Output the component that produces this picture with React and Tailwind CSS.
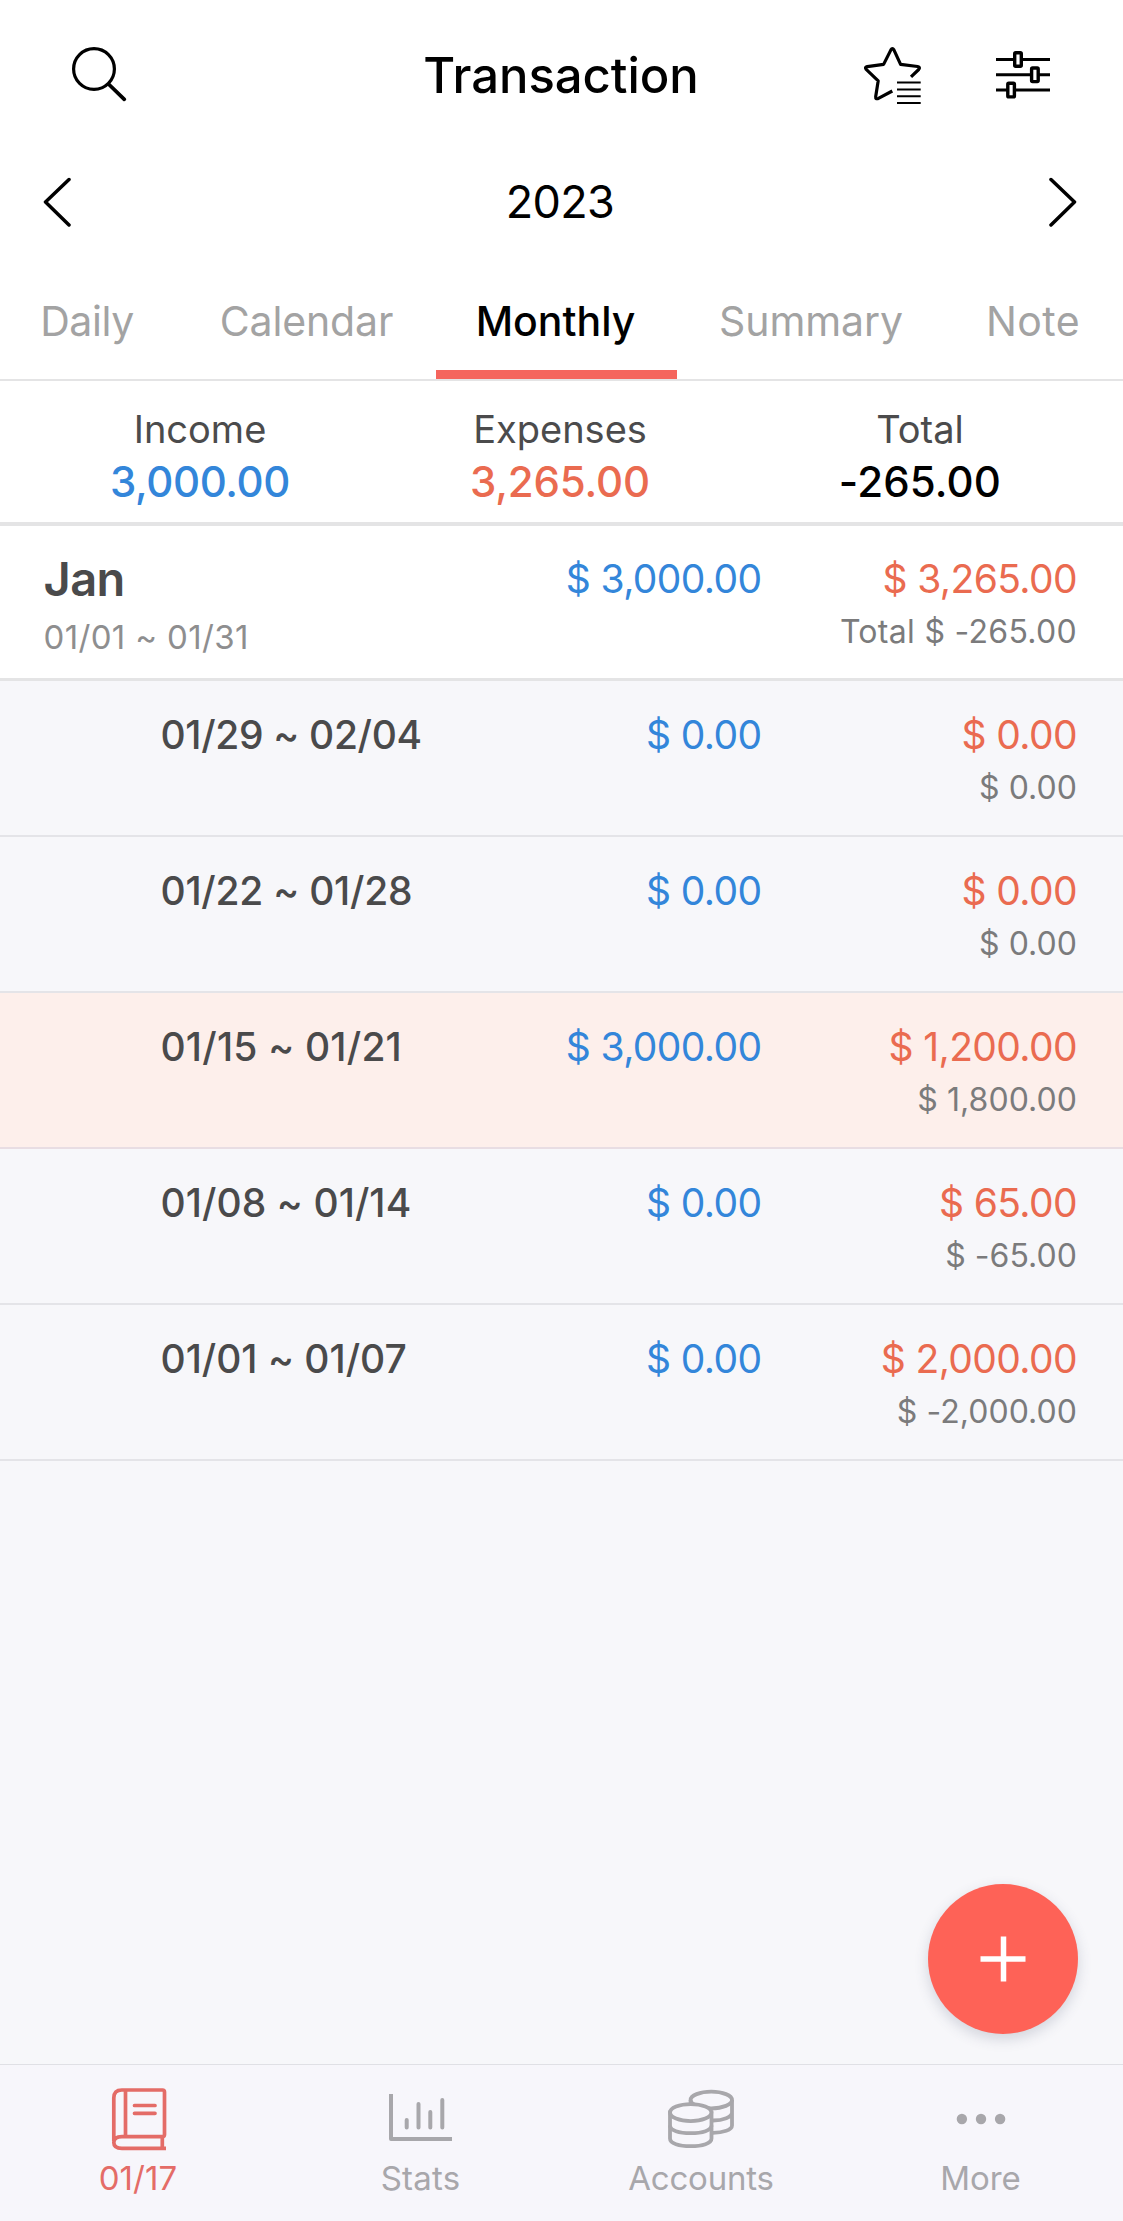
import React from "react";

const tabs = [
  { label: "Daily", cell: "w-[177px] pr-[3px]", text: "tracking-[-0.4px]" },
  { label: "Calendar", cell: "w-[259px]", text: "tracking-[-0.15px]" },
  { label: "Monthly", cell: "w-[241px]", text: "", active: true },
  { label: "Summary", cell: "w-[269px] pr-px", text: "tracking-[-0.08px]" },
  { label: "Note", cell: "w-[175px] pr-px", text: "tracking-[0.4px]" },
];

const totals = [
  { label: "Income", value: "3,000.00", color: "text-[#3386da]", text: "tracking-[-0.4px]" },
  { label: "Expenses", value: "3,265.00", color: "text-[#ea6b50]", text: "tracking-[-0.16px]" },
  { label: "Total", value: "-265.00", color: "text-black", text: "tracking-[0.15px]" },
];

const weeks = [
  { range: "01/29 ~ 02/04", text: "tracking-[-0.33px]", income: "$ 0.00", expense: "$ 0.00", net: "$ 0.00" },
  { range: "01/22 ~ 01/28", text: "tracking-[-0.25px]", income: "$ 0.00", expense: "$ 0.00", net: "$ 0.00" },
  { range: "01/15 ~ 01/21", text: "tracking-[0.2px]", income: "$ 3,000.00", expense: "$ 1,200.00", net: "$ 1,800.00", current: true },
  { range: "01/08 ~ 01/14", text: "tracking-[0.07px]", income: "$ 0.00", expense: "$ 65.00", net: "$ -65.00" },
  { range: "01/01 ~ 01/07", text: "tracking-[-0.02px]", income: "$ 0.00", expense: "$ 2,000.00", net: "$ -2,000.00" },
];

function SearchIcon() {
  return (
    <svg width="60" height="60" viewBox="70 46 60 60" fill="none" stroke="black">
      <circle cx="94" cy="70" r="20.4" strokeWidth="3.2" />
      <path d="M109 85.5 124.3 100.3" strokeWidth="3.8" strokeLinecap="round" />
    </svg>
  );
}

function StarListIcon() {
  return (
    <svg width="60" height="60" viewBox="863 46 60 60" fill="none" stroke="black">
      <path
        d="M892.3 92 878.4 99.4Q875.4 100.6 875.7 97.6L878.2 81.8 866.2 70.4Q864.4 68.2 867.2 67.6L883.6 65.4 890.9 50.9Q892.4 48.2 893.9 50.9L900.6 65.4 917.6 67.5Q920.6 68.2 918.7 70.5L911 77.8"
        strokeWidth="3.2"
        strokeLinejoin="round"
      />
      <path d="M897 83.5h23.7M897 90.4h23.7M897 97.2h23.7M897 104h23.7" strokeWidth="2" />
    </svg>
  );
}

function SlidersIcon() {
  return (
    <svg width="56" height="52" viewBox="995 49 56 52" fill="none" stroke="black" strokeWidth="3">
      <path d="M996 59.4h54M996 74.7h54M996 90h54" />
      <g fill="white" strokeWidth="3.4">
        <rect x="1014.7" y="52.7" width="6.6" height="13.6" rx="1" />
        <rect x="1031.6" y="68" width="6.6" height="13.6" rx="1" />
        <rect x="1007.8" y="83.3" width="6.6" height="13.6" rx="1" />
      </g>
    </svg>
  );
}

function Chevron({ flip }) {
  return (
    <svg
      width="28"
      height="50"
      viewBox="43 176.5 28 50"
      fill="none"
      stroke="black"
      strokeWidth="3.5"
      strokeLinecap="round"
      strokeLinejoin="round"
      className={flip ? "-scale-x-100" : ""}
    >
      <path d="M69 179 45.5 201.5 69 224.5" />
    </svg>
  );
}

function BookIcon() {
  return (
    <svg width="58" height="66" viewBox="110 2086 58 66" fill="none" stroke="currentColor" strokeWidth="3.7">
      <path d="M113.8 2141V2098q0-8 8-8H162.5q2 0 2 2V2134.5q0 2.2-2.2 2.2H122q-8.2 0-8.2 5.8t8.2 5.8H166" />
      <path d="M125.5 2090V2136.7M162.3 2136.7V2148.3" />
      <path d="M134.5 2105.5H155M134.5 2113.3H155" strokeLinecap="round" />
    </svg>
  );
}

function StatsIcon() {
  return (
    <svg width="64" height="66" viewBox="389 2086 64 66" fill="none" stroke="currentColor" strokeWidth="4">
      <path d="M391 2094V2139H452" strokeLinejoin="round" />
      <path d="M406.7 2120V2127.5M418.5 2104V2127.5M430.3 2112V2127.5M442.3 2100V2127.5" strokeLinecap="round" />
    </svg>
  );
}

function CoinsIcon() {
  return (
    <svg width="68" height="66" viewBox="667 2086 68 66" fill="none" stroke="currentColor" strokeWidth="3.8">
      <ellipse cx="711.3" cy="2100" rx="20.7" ry="8.3" />
      <path d="M690.6 2100V2105M732 2100V2125.5C732 2130 723 2132.8 713 2132.8M732 2112.5C732 2117 723 2120.5 713 2120.5" />
      <path d="M670 2112.5V2138.5C670 2143.5 679 2146.2 690.7 2146.2S711.5 2143.5 711.5 2138.5V2112.5Z" className="fill-[#f7f6fb]" />
      <ellipse cx="690.7" cy="2112.6" rx="20.7" ry="8.5" className="fill-[#f7f6fb]" />
      <path d="M670 2125.5C670 2130.5 679 2133.2 690.7 2133.2S711.5 2130.5 711.5 2125.5" />
    </svg>
  );
}

function DotsIcon() {
  return (
    <svg width="54" height="66" viewBox="954 2086 54 66" fill="currentColor">
      <circle cx="961.9" cy="2119" r="5.2" />
      <circle cx="981" cy="2119" r="5.2" />
      <circle cx="1000.1" cy="2119" r="5.2" />
    </svg>
  );
}

const nav = [
  { label: "01/17", Icon: BookIcon, color: "text-[#e46c67]", text: "pr-[2px] tracking-[0.1px]", cell: "w-[278px]" },
  { label: "Stats", Icon: StatsIcon, color: "text-[#a8a7ab]", text: "tracking-[0.2px]", cell: "w-[285px]" },
  { label: "Accounts", Icon: CoinsIcon, color: "text-[#a8a7ab]", text: "tracking-[-0.2px]", cell: "w-[276px]" },
  { label: "More", Icon: DotsIcon, color: "text-[#a8a7ab]", text: "tracking-[-0.1px]", cell: "w-[283px]" },
];

function Amounts({ income, expense, net, netText }) {
  return (
    <>
      <div className="w-[301px] text-right text-[39px] leading-[52px] tracking-[-0.6px] text-[#3386da]">{income}</div>
      <div className="flex w-[315.5px] flex-col text-right">
        <span className="text-[39px] leading-[52px] tracking-[-0.6px] text-[#ea6b50]">{expense}</span>
        <span className={`text-[32px] leading-[53px] text-[#7b7b7c] ${netText}`}>{net}</span>
      </div>
    </>
  );
}

export default function App() {
  return (
    <div className="relative flex h-[2221px] w-[1123px] flex-col overflow-hidden whitespace-nowrap bg-[#f7f7fa] font-['Inter',sans-serif]">
      <div className="bg-white">
        <header className="grid h-[150px] grid-cols-[350px_422px_351px] items-center">
          <div className="pl-[70px]">
            <SearchIcon />
          </div>
          <h1 className="pt-[2px] text-center text-[49px] leading-[60px] font-medium tracking-[-0.04px] text-black">
            Transaction
          </h1>
          <div className="flex items-center gap-[72px] pl-[91px]">
            <StarListIcon />
            <SlidersIcon />
          </div>
        </header>

        <div className="flex h-[103px] items-center justify-between pr-[46px] pl-[43px]">
          <Chevron />
          <span className="text-[45px] leading-[60px] tracking-[-0.7px] text-black">2023</span>
          <Chevron flip />
        </div>

        <nav className="flex h-[128px] border-b-2 border-[#e4e4e5]">
          {tabs.map((t) => (
            <div
              key={t.label}
              className={`flex h-[126px] shrink-0 flex-col items-center justify-between pt-[38px] text-[41px] leading-[60px] ${t.cell} ${t.text} ${
                t.active ? "font-medium text-black" : "text-[#a3a3a3]"
              }`}
            >
              <span className={t.active ? "pr-[2px]" : ""}>{t.label}</span>
              {t.active && <span className="h-[9px] w-full bg-[#f5655d]" />}
            </div>
          ))}
        </nav>

        <section className="grid h-[145px] grid-cols-3 border-b-4 border-[#e4e4e5] pt-[22px] pr-[23px] pl-5 text-center">
          {totals.map((t) => (
            <div key={t.label} className="flex flex-col">
              <span className="text-[38px] leading-[52px] text-[#4b4b4c]">{t.label}</span>
              <span className={`text-[42px] leading-[53px] font-medium ${t.color} ${t.text}`}>{t.value}</span>
            </div>
          ))}
        </section>

        <section className="flex h-[155px] border-b-[3px] border-[#e4e4e5] pt-[27px] pl-[43.5px]">
          <div className="flex w-[417px] flex-col">
            <span className="text-[47px] leading-[52px] font-semibold tracking-[-0.6px] text-[#4a4a4b]">Jan</span>
            <span className="pt-[5px] text-[33px] leading-[54px] tracking-[0.35px] text-[#8e8e8f]">01/01 ~ 01/31</span>
          </div>
          <Amounts income="$ 3,000.00" expense="$ 3,265.00" net="Total $ -265.00" netText="tracking-[0.3px]" />
        </section>
      </div>

      <main className="flex-1">
        {weeks.map((w) => (
          <div
            key={w.range}
            className={`flex h-[156px] border-b-2 pt-[28px] pl-[160.5px] ${
              w.current ? "border-[#e8dde3] bg-[#fdefeb]" : "border-[#e4e4e8]"
            }`}
          >
            <div className={`w-[300px] text-[39px] leading-[52px] font-medium text-[#4a4a4b] ${w.text}`}>{w.range}</div>
            <Amounts income={w.income} expense={w.expense} net={w.net} netText="tracking-[0.05px]" />
          </div>
        ))}
      </main>

      <button
        aria-label="Add transaction"
        className="absolute right-[45px] bottom-[187px] flex size-[150px] items-center justify-center rounded-full bg-[#fe6257] shadow-[0_5px_14px_rgba(60,70,100,0.2)]"
      >
        <svg width="46" height="46" viewBox="0 0 46 46" stroke="white" strokeWidth="5.5">
          <path d="M23.5 0.5V45.5M0.5 23H45.5" />
        </svg>
      </button>

      <footer className="flex h-[157px] border-t border-[#e0e0e5] bg-[#f7f6fb] pt-[21px]">
        {nav.map(({ label, Icon, color, text, cell }) => (
          <div key={label} className={`flex shrink-0 flex-col items-center ${cell} ${color}`}>
            <Icon />
            <span className={`pt-1 text-[33px] leading-[44px] ${text}`}>{label}</span>
          </div>
        ))}
      </footer>
    </div>
  );
}
